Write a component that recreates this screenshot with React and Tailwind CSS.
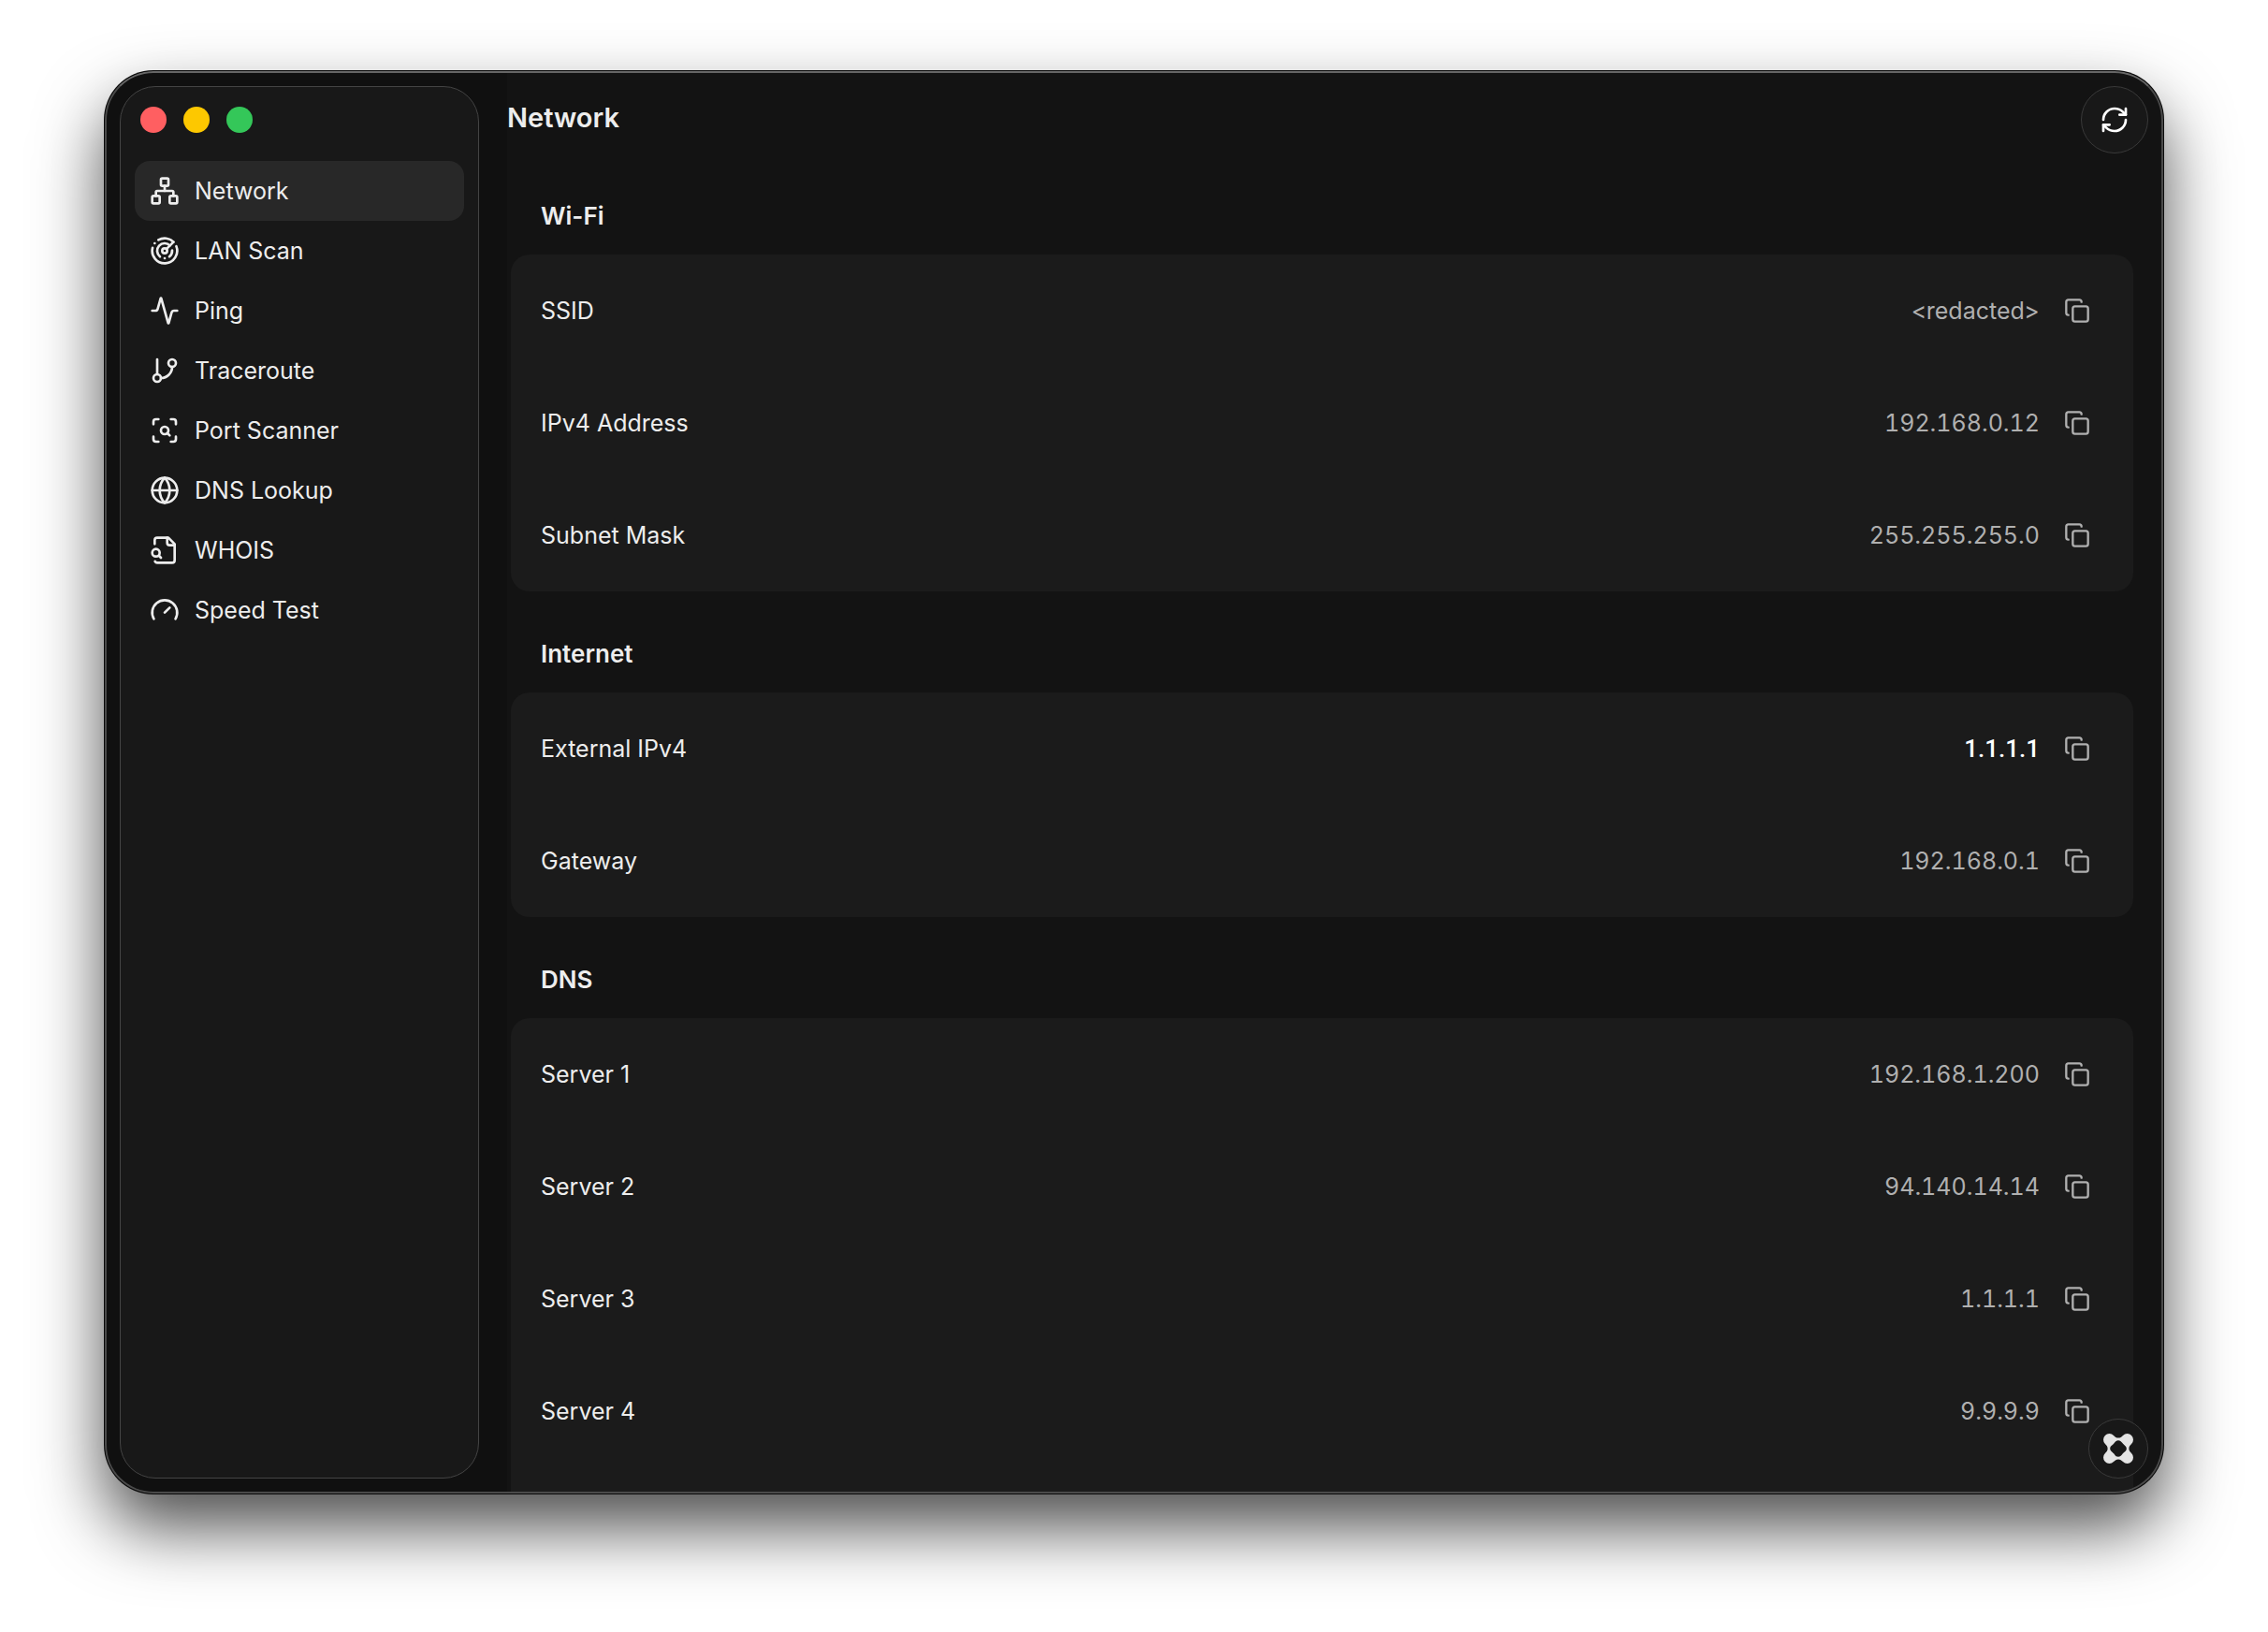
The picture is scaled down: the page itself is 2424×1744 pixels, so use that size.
import { useState } from 'react';
import {
  Activity,
  Copy,
  Gauge,
  GitBranch,
  Globe,
  Network,
  Radar,
  RefreshCw,
  ScanSearch,
} from 'lucide-react';

// page outline with a magnifier on its left edge
function FileLookup({ size = 24, ...props }) {
  return (
    <svg
      width={size}
      height={size}
      viewBox="0 0 24 24"
      fill="none"
      stroke="currentColor"
      strokeWidth="2"
      strokeLinecap="round"
      strokeLinejoin="round"
      {...props}
    >
      <path d="M14 2v4a2 2 0 0 0 2 2h4" />
      <path d="M4.268 21a2 2 0 0 0 1.727 1H18a2 2 0 0 0 2-2V7l-5-5H6a2 2 0 0 0-2 2v3" />
      <path d="m9 18-1.5-1.5" />
      <circle cx="5" cy="14" r="3" />
    </svg>
  );
}

function NodesLogo() {
  return (
    <svg width="32" height="32" viewBox="0 0 32 32" fill="currentColor" fillRule="evenodd" aria-hidden="true">
      <path
        d="M11 1.9C13 3.6 13.6 4.6 16 4.6S19 3.6 21 1.9A6.4 6.4 0 0 1 30.1 11C28.4 13 27.4 13.6 27.4 16S28.4 19 30.1 21A6.4 6.4 0 0 1 21 30.1C19 28.4 18.4 27.4 16 27.4S13 28.4 11 30.1A6.4 6.4 0 0 1 1.9 21C3.6 19 4.6 18.4 4.6 16S3.6 13 1.9 11A6.4 6.4 0 0 1 11 1.9Z
        M16 7.2C18 7.2 18.9 8.2 19.9 9.6S21.5 11.3 22.5 12.2S24.8 14 24.8 16S23.8 18.9 22.5 19.8S20.8 21.4 19.9 22.5S18 24.8 16 24.8S13.1 23.8 12.1 22.5S10.5 20.8 9.5 19.8S7.2 18 7.2 16S8.2 13.1 9.5 12.2S11.2 10.6 12.1 9.5S14 7.2 16 7.2Z"
      />
    </svg>
  );
}

const NAV_ITEMS = [
  { id: 'network', label: 'Network', icon: Network },
  { id: 'lan', label: 'LAN Scan', icon: Radar },
  { id: 'ping', label: 'Ping', icon: Activity },
  { id: 'traceroute', label: 'Traceroute', icon: GitBranch },
  { id: 'ports', label: 'Port Scanner', icon: ScanSearch },
  { id: 'dns', label: 'DNS Lookup', icon: Globe },
  { id: 'whois', label: 'WHOIS', icon: FileLookup },
  { id: 'speed', label: 'Speed Test', icon: Gauge },
];

const SECTIONS = [
  {
    title: 'Wi-Fi',
    rows: [
      { label: 'SSID', value: '<redacted>' },
      { label: 'IPv4 Address', value: '192.168.0.12' },
      { label: 'Subnet Mask', value: '255.255.255.0' },
    ],
  },
  {
    title: 'Internet',
    rows: [
      { label: 'External IPv4', value: '1.1.1.1', highlight: true },
      { label: 'Gateway', value: '192.168.0.1' },
    ],
  },
  {
    title: 'DNS',
    rows: [
      { label: 'Server 1', value: '192.168.1.200' },
      { label: 'Server 2', value: '94.140.14.14' },
      { label: 'Server 3', value: '1.1.1.1' },
      { label: 'Server 4', value: '9.9.9.9' },
    ],
  },
];

function Sidebar({ active, onSelect }) {
  return (
    <aside className="m-4 mr-0 flex w-96 shrink-0 flex-col rounded-[38px] border border-[#444] bg-[#181818] px-[15px] pt-[21px]">
      <div className="flex gap-[18px] px-1.5">
        <button aria-label="Close" className="size-7 rounded-full bg-[#ff5f61]" />
        <button aria-label="Minimize" className="size-7 rounded-full bg-[#fdc800]" />
        <button aria-label="Zoom" className="size-7 rounded-full bg-[#34c759]" />
      </div>

      <nav className="mt-[30px] flex flex-col">
        {NAV_ITEMS.map(({ id, label, icon: Icon }) => (
          <button
            key={id}
            onClick={() => onSelect(id)}
            className={`flex h-16 items-center gap-4 rounded-2xl px-4 text-left ${
              active === id ? 'bg-[#282828]' : ''
            }`}
          >
            <Icon size={32} aria-hidden="true" />
            {label}
          </button>
        ))}
      </nav>
    </aside>
  );
}

function InfoRow({ label, value, highlight }) {
  return (
    <div className="flex h-[120px] items-center justify-between pr-[46px] pl-8">
      <dt>{label}</dt>
      <dd className="flex items-center gap-[26px]">
        <span
          className={
            highlight ? "font-['Roboto',sans-serif] text-[26px] font-medium text-white" : 'text-[#b0b0b0] tabular-nums'
          }
        >
          {value}
        </span>
        <button aria-label={`Copy ${label}`} className="text-[#b0b0b0]">
          <Copy size={28} />
        </button>
      </dd>
    </div>
  );
}

export default function App() {
  const [active, setActive] = useState('network');

  return (
    <div className="flex min-h-screen bg-white px-28 pt-[76px] pb-[148px] font-['Inter',sans-serif] text-[25px] leading-8 text-[#ededed]">
      <div className="relative flex flex-1 overflow-hidden rounded-[52px] bg-[#101010] shadow-[0_0_0_1px_#0a0a0a,0_36px_72px_rgba(0,0,0,0.7)]">
        <Sidebar active={active} onSelect={setActive} />

        <main className="ml-[30px] flex flex-1 flex-col bg-[#131313]">
          <header className="flex items-center justify-between pt-4 pr-4">
            <h1 className="pb-1 text-[29px] font-semibold">Network</h1>
            <button
              aria-label="Refresh"
              className="flex size-[72px] items-center justify-center rounded-full border border-[#3a3a3a] bg-[#181818] text-white"
            >
              <RefreshCw size={32} />
            </button>
          </header>

          <div className="flex flex-1 flex-col pt-[34px] pr-8 pl-1">
            {SECTIONS.map((section) => (
              <section key={section.title} className="group flex flex-col last:flex-1">
                <h2 className="px-8 pt-[17px] pb-[25px] text-[26px] font-semibold">{section.title}</h2>
                {/* the last card runs on to the bottom edge of the window */}
                <dl className="mb-[34px] rounded-[20px] bg-[#1b1b1b] group-last:mb-0 group-last:flex-1 group-last:rounded-b-none">
                  {section.rows.map((row) => (
                    <InfoRow key={row.label} {...row} />
                  ))}
                </dl>
              </section>
            ))}
          </div>
        </main>

        <button
          aria-label="Connections"
          className="absolute right-4 bottom-4 flex size-16 items-center justify-center rounded-full border border-[#3a3a3a] bg-[#181818] text-[#e4e4e4]"
        >
          <NodesLogo />
        </button>

        {/* bright rim drawn over the window contents */}
        <div className="pointer-events-none absolute inset-0 rounded-[52px] border-2 border-[#4a4a4a] border-t-[#666]" />
      </div>
    </div>
  );
}
